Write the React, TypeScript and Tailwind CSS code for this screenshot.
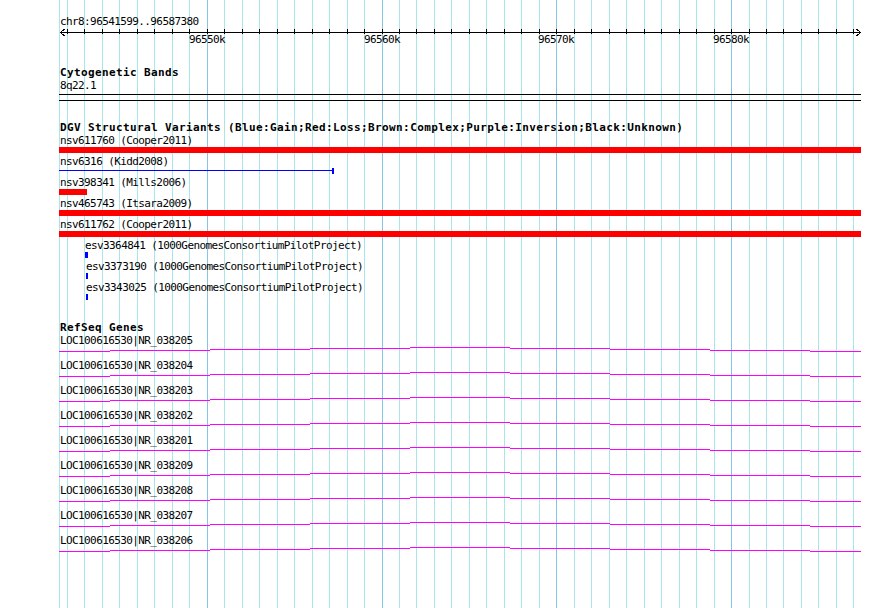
import React from "react";

const START = 96541599;
const END = 96587380;
const X0 = 60;
const SPAN = 800;

// bp -> pixel column inside the 890px panel
const xOf = (bp: number) => Math.round(X0 + ((bp - START) * SPAN) / (END - START));

const ticks = Array.from({ length: 46 }, (_, i) => 96542000 + i * 1000);
const majors = ticks.filter((bp) => bp % 10000 === 0);

const variants = [
  { name: "nsv611760 (Cooper2011)", kind: "bar", from: 59, to: 861 },
  { name: "nsv6316 (Kidd2008)", kind: "line", from: 59, to: 332 },
  { name: "nsv398341 (Mills2006)", kind: "bar", from: 59, to: 87 },
  { name: "nsv465743 (Itsara2009)", kind: "bar", from: 59, to: 861 },
  { name: "nsv611762 (Cooper2011)", kind: "bar", from: 59, to: 861 },
  { name: "esv3364841 (1000GenomesConsortiumPilotProject)", kind: "tick", from: 85, to: 88 },
  { name: "esv3373190 (1000GenomesConsortiumPilotProject)", kind: "tick", from: 86, to: 88 },
  { name: "esv3343025 (1000GenomesConsortiumPilotProject)", kind: "tick", from: 86, to: 88 },
];

const genes = ["038205", "038204", "038203", "038202", "038201", "038209", "038208", "038207", "038206"];

// intron "hat": stepped line, 1px per 100px
const hatEdges = [59, 110, 210, 310, 410, 510, 610, 710, 810, 861];
const hatDrop = [4, 3, 2, 1, 0, 1, 2, 3, 4];

const small = "text-[11px] leading-[8px] tracking-[-0.6px] whitespace-nowrap";

function Grid() {
  return (
    <svg width={890} height={608} className="absolute inset-0" shapeRendering="crispEdges">
      <rect x={59} y={0} width={1} height={608} fill="#a8e6ec" />
      {ticks.map((bp) => (
        <rect
          key={bp}
          x={xOf(bp)}
          y={0}
          width={1}
          height={608}
          fill={bp % 10000 === 0 ? "#86c4e8" : "#a8e6ec"}
        />
      ))}
    </svg>
  );
}

function Ruler() {
  return (
    <svg width={890} height={18} className="block mt-[2px]" shapeRendering="crispEdges">
      <rect x={60} y={4} width={801} height={1} fill="#000" />
      <path d="M64.5 1 L60.5 4.5 L64.5 8" fill="none" stroke="#000" />
      <path d="M856.5 1 L860.5 4.5 L856.5 8" fill="none" stroke="#000" />
      {ticks.map((bp) => (
        <rect key={bp} x={xOf(bp)} y={1} width={1} height={5} fill="#000" />
      ))}
      {majors.map((bp) => (
        <text
          key={bp}
          x={xOf(bp)}
          y={15}
          textAnchor="middle"
          fontFamily="DejaVu Sans Mono, monospace"
          fontSize={11}
          letterSpacing={-0.6}
          fill="#000"
        >
          {bp / 1000}k
        </text>
      ))}
    </svg>
  );
}

function Title({ children, className = "" }: { children: React.ReactNode; className?: string }) {
  return (
    <div className={"pl-[60px] text-[11px] font-bold leading-[8px] tracking-[0.38px] whitespace-nowrap " + className}>
      {children}
    </div>
  );
}

function VariantRow({ v }: { v: (typeof variants)[number] }) {
  const indent = v.kind === "tick" ? (v.from === 85 ? "pl-[85px]" : "pl-[86px]") : "pl-[60px]";
  return (
    <div className="h-[21px]">
      <div className={small + " " + indent}>{v.name}</div>
      {v.kind === "line" ? (
        <div className="mt-[2px] flex items-start pl-[59px]">
          <div className="mt-[2px] h-px w-[273px] bg-[#0000ff]" />
          <div className="h-[6px] w-[2px] bg-[#0000ff]" />
        </div>
      ) : (
        <div className="mt-[2px] flex">
          <div
            className={"shrink-0 h-[6px] " + (v.kind === "bar" ? "bg-[#ff0000]" : "bg-[#0000ff]")}
            style={{ marginLeft: v.from, width: v.to - v.from }}
          />
        </div>
      )}
    </div>
  );
}

function GeneRow({ id }: { id: string }) {
  return (
    <div className="h-[25px]">
      <div className={"pl-[60px] " + small}>LOC100616530|NR_{id}</div>
      <svg width={890} height={15} className="block mt-[2px]" shapeRendering="crispEdges">
        {hatDrop.map((d, i) => (
          <rect
            key={i}
            x={hatEdges[i]}
            y={d}
            width={hatEdges[i + 1] - hatEdges[i]}
            height={1}
            fill="#ff00ff"
          />
        ))}
      </svg>
    </div>
  );
}

export default function App() {
  return (
    <div className="relative w-[890px] h-[608px] overflow-hidden bg-white text-black [font-family:'DejaVu_Sans_Mono',monospace]">
      <Grid />
      <div className="relative flex flex-col pt-[18px]">
        <div className={"pl-[60px] " + small}>chr8:96541599..96587380</div>
        <Ruler />

        <Title className="mt-[23px]">Cytogenetic Bands</Title>
        <div className={"mt-[5px] pl-[60px] " + small}>8q22.1</div>
        <svg width={890} height={10} className="block mt-[2px]" shapeRendering="crispEdges">
          <rect x={59} y={2} width={802} height={1} fill="#000" />
          <rect x={59} y={8} width={802} height={1} fill="#000" />
        </svg>

        <Title className="mt-[22px]">
          DGV Structural Variants (Blue:Gain;Red:Loss;Brown:Complex;Purple:Inversion;Black:Unknown)
        </Title>
        <div className="mt-[5px] flex flex-col">
          {variants.map((v) => (
            <VariantRow key={v.name} v={v} />
          ))}
        </div>

        <Title className="mt-[19px]">RefSeq Genes</Title>
        <div className="mt-[5px] flex flex-col">
          {genes.map((g) => (
            <GeneRow key={g} id={g} />
          ))}
        </div>
      </div>
    </div>
  );
}
